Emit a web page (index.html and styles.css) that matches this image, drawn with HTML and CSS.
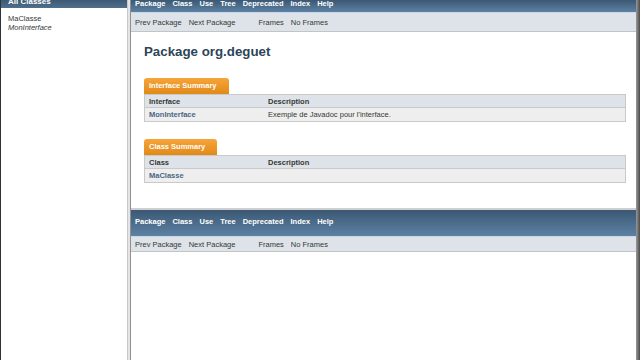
FILE: index.html
```html
<!DOCTYPE html>
<html lang="fr">
  <head>
    <meta charset="UTF-8">
    <title>org.deguet</title>
    <link rel="stylesheet" href="styles.css">
  </head>
  <body>
    <div class="frames">

      <div class="left-frame">
        <div class="all-classes"><span>All Classes</span></div>
        <ul class="class-list">
          <li>MaClasse</li>
          <li><i>MonInterface</i></li>
        </ul>
      </div>

      <div class="v-split"></div>

      <div class="right-col">
        <div class="top-frame">
          <div class="top-nav short">
            <ul>
              <li>Package</li><li>Class</li><li>Use</li><li>Tree</li><li>Deprecated</li><li>Index</li><li>Help</li>
            </ul>
          </div>
          <div class="sub-nav">
            <span>Prev Package</span><span>Next Package</span>
            <span class="gap">Frames</span><span>No Frames</span>
          </div>

          <h1 class="title">Package org.deguet</h1>

          <div class="summary">
            <div class="tab">Interface Summary</div>
            <table>
              <tr class="head"><th>Interface</th><th>Description</th></tr>
              <tr><td class="name">MonInterface</td><td>Exemple de Javadoc pour l'interface.</td></tr>
            </table>
          </div>

          <div class="summary">
            <div class="tab">Class Summary</div>
            <table>
              <tr class="head"><th>Class</th><th>Description</th></tr>
              <tr><td class="name">MaClasse</td><td></td></tr>
            </table>
          </div>
        </div>

        <div class="h-split"></div>

        <div class="bottom-frame">
          <div class="top-nav">
            <ul>
              <li>Package</li><li>Class</li><li>Use</li><li>Tree</li><li>Deprecated</li><li>Index</li><li>Help</li>
            </ul>
          </div>
          <div class="sub-nav low">
            <span>Prev Package</span><span>Next Package</span>
            <span class="gap">Frames</span><span>No Frames</span>
          </div>
        </div>
      </div>

      <div class="edge"></div>
    </div>
  </body>
</html>
```

FILE: styles.css
```css
body {
  margin: 0;
  font-family: 'Liberation Sans', Arial, sans-serif;
  color: #353833;
  background: #ffffff;
}

.frames {
  display: flex;
  height: 360px;
  overflow: hidden;
}

/* left frame */
.left-frame {
  width: 126px;
  border-left: 1px solid #333;
  background: #fff;
}

.all-classes {
  height: 8px;
  overflow: hidden;
  background: linear-gradient(#3d5a75, #4f6f8c);
  color: #fff;
  font-weight: bold;
  font-size: 8px;
}

.all-classes span {
  display: block;
  margin: -3px 0 0 7px;
}

.class-list {
  list-style: none;
  margin: 6px 0 0 7px;
  padding: 0;
  font-size: 7.5px;
  line-height: 9px;
  color: #3a3a3a;
}

.v-split {
  width: 4px;
  background: #e4e4e4;
  border-left: 1px solid #c8c8c8;
  border-right: 1px solid #8f8f8f;
  box-sizing: border-box;
}

.right-col {
  flex: 1;
  display: flex;
  flex-direction: column;
}

.edge {
  width: 4px;
  background: linear-gradient(90deg, #9a9a9a, #4a4a4a);
}

/* navigation bars */
.top-nav {
  height: 26px;
  background: linear-gradient(#3b5874, #5d81a3);
  overflow: hidden;
}

.top-nav.short {
  height: 12px;
}

.top-nav ul {
  list-style: none;
  margin: 7px 0 0 4px;
  padding: 0;
  display: flex;
  gap: 7px;
  color: #fff;
  font-weight: bold;
  font-size: 7.5px;
  line-height: 9px;
}

.top-nav.short ul {
  margin-top: -1px;
}

.sub-nav {
  height: 20px;
  background: #dee3e9;
  border-top: 1px solid #c9d8e6;
  border-bottom: 1px solid #c4c4c4;
  box-sizing: border-box;
  display: flex;
  align-items: center;
  padding-left: 4px;
  gap: 7px;
  font-size: 7.5px;
  color: #353833;
}

.sub-nav.low {
  height: 16px;
}

.sub-nav .gap {
  margin-left: 16px;
}

/* content */
.top-frame {
  height: 208px;
  overflow: hidden;
}

.title {
  margin: 12px 0 18px 13px;
  font-size: 13.3px;
  line-height: 16px;
  color: #2c4557;
}

.summary {
  margin: 0 10px 17px 13px;
}

.tab {
  width: max-content;
  height: 16px;
  line-height: 16px;
  padding: 0 12px 0 5px;
  background: linear-gradient(#f7a43a, #e08a18);
  border-radius: 3px 3px 0 0;
  color: #fff;
  font-weight: bold;
  font-size: 7.5px;
}

table {
  width: 100%;
  border-collapse: collapse;
  border: 1px solid #c9c9c9;
  font-size: 7.5px;
  color: #353833;
}

th, td {
  text-align: left;
  padding: 0 4px;
}

tr.head {
  height: 13px;
  background: #dee3e9;
  border-bottom: 1px solid #c9c9c9;
}

th {
  font-weight: bold;
}

th:first-child {
  width: 111px;
}

td {
  height: 13px;
  background: #eeeeef;
}

td.name {
  font-weight: bold;
  color: #4a6782;
}

.h-split {
  height: 2px;
  background: #cfcfcf;
}

.bottom-frame {
  flex: 1;
  background: #fff;
}
```
